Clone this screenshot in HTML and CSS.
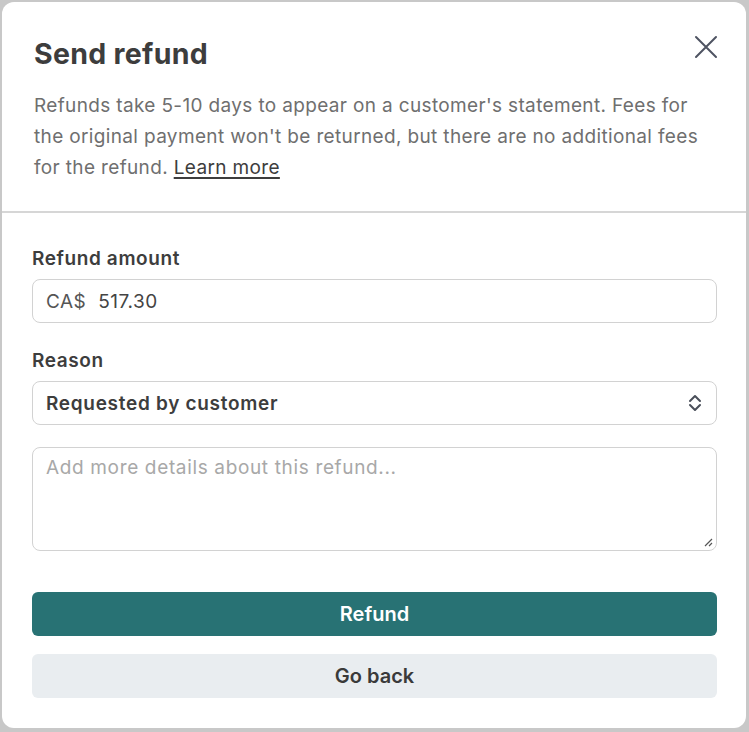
FILE: index.html
```html
<!DOCTYPE html>
<html>
<head>
<meta charset="utf-8">
<link rel="stylesheet" href="styles.css">
</head>
<body>
<div class="modal">
  <div class="head">
    <div class="title-row">
      <h1 class="title">Send refund</h1>
      <button class="close" aria-label="Close">
        <svg width="24" height="24" viewBox="0 0 24 24"><path d="M2 2L22 22M22 2L2 22" stroke="#4e5362" stroke-width="2" stroke-linecap="round" fill="none"/></svg>
      </button>
    </div>
    <p class="desc">Refunds take 5-10 days to appear on a customer's statement. Fees for the original payment won't be returned, but there are no additional fees for the refund. <a href="#" class="link">Learn more</a></p>
  </div>
  <div class="body">
    <label class="label">Refund amount</label>
    <div class="field input"><span class="cur">CA$</span><span>517.30</span></div>
    <label class="label">Reason</label>
    <div class="field select"><span>Requested by customer</span>
      <svg class="chev" width="14" height="20" viewBox="0 0 14 20"><path d="M2 8L7 3L12 8M2 12L7 17L12 12" stroke="#4a4f5a" stroke-width="2" fill="none" stroke-linecap="round" stroke-linejoin="round"/></svg>
    </div>
    <div class="field area"><span class="ph">Add more details about this refund...</span>
      <svg class="grip" width="10" height="10" viewBox="0 0 10 10"><path d="M9 2L2 9M9 6L6 9" stroke="#555" stroke-width="1.2"/></svg>
    </div>
    <button class="btn primary">Refund</button>
    <button class="btn secondary">Go back</button>
  </div>
</div>
</body>
</html>
```
FILE: styles.css
```css
html, body { margin: 0; padding: 0; }
body {
  background: #c8c8c8;
  font-family: "Inter", "Noto Sans", sans-serif;
  padding: 2px 3px 4px 2px;
  height: 732px;
  box-sizing: border-box;
}
.modal {
  background: #fff;
  border-radius: 12px;
  height: 726px;
  box-sizing: border-box;
}
.head {
  padding: 36px 30px 0 32px;
  border-bottom: 2px solid #d6d6d6;
  height: 211px;
  box-sizing: border-box;
}
.title-row {
  display: flex;
  justify-content: space-between;
  align-items: flex-start;
}
.title {
  margin: 0;
  font-size: 28.5px;
  font-weight: 700;
  color: #3d3d3d;
  line-height: 32px;
  letter-spacing: 0.3px;
}
.close {
  border: 0;
  background: none;
  padding: 0;
  margin-top: -3px;
  margin-right: -2px;
  width: 24px;
  height: 24px;
}
.desc {
  margin: 20px 0 0;
  font-size: 19px;
  line-height: 31px;
  color: #6f6f6f;
  letter-spacing: 0.35px;
}
.link { color: #3d3d3d; text-decoration: underline; text-underline-offset: 3px; text-decoration-thickness: 2px; }
.body {
  padding: 34px 29px 0 30px;
  display: flex;
  flex-direction: column;
}
.label {
  font-size: 19px;
  font-weight: 600;
  color: #3d3d3d;
  line-height: 24px;
  margin-bottom: 8px;
  letter-spacing: 0.6px;
}
.field {
  border: 1.5px solid #d2d2d2;
  border-radius: 8px;
  height: 44px;
  box-sizing: border-box;
  display: flex;
  align-items: center;
  padding: 0 14px 0 13px;
  font-size: 19px;
  color: #444;
  letter-spacing: 0.5px;
}
.input { margin-bottom: 26px; gap: 12px; }
.cur { color: #555; }
.select { font-weight: 600; color: #3d3d3d; justify-content: space-between; margin-bottom: 22px; letter-spacing: 0.7px; }
.area {
  height: 104px;
  align-items: flex-start;
  padding-top: 8px;
  position: relative;
  margin-bottom: 41px;
}
.ph { color: #a8a8a8; letter-spacing: 0.65px; }
.grip { position: absolute; right: 3px; bottom: 3px; }
.btn {
  border: 0;
  border-radius: 6px;
  height: 44px;
  font-family: inherit;
  font-size: 20px;
  font-weight: 600;
  margin: 0 0 18px;
  width: 100%;
}
.primary { background: #287274; color: #fff; }
.secondary { background: #e9edf0; color: #3a3a3a; }
```
